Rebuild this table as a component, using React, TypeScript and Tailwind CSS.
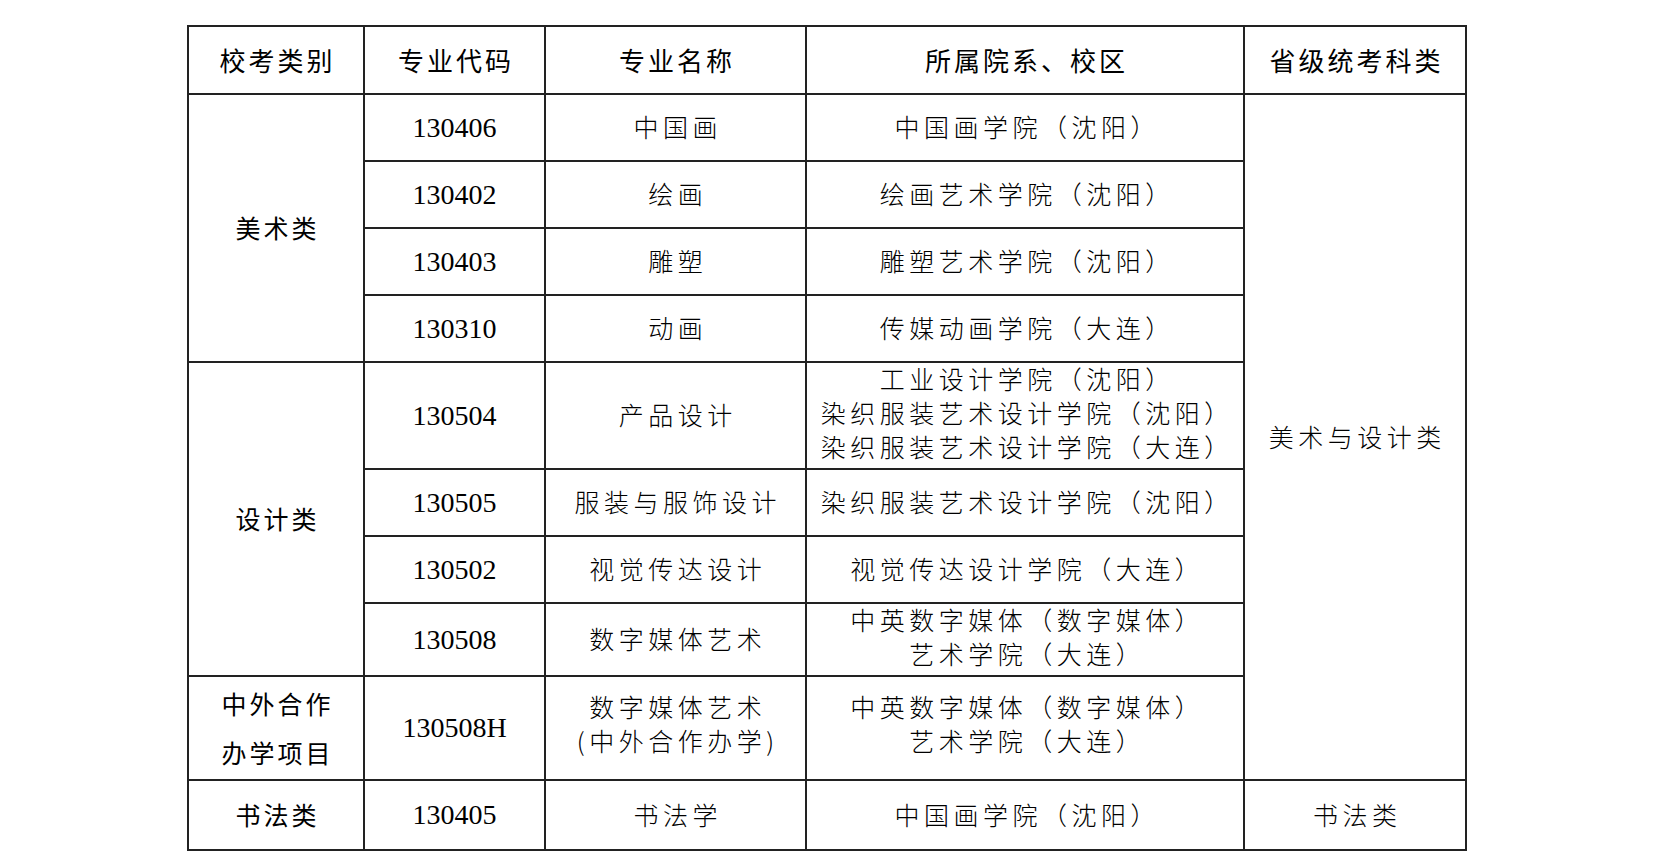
import React from 'react';

const cjk = "'Noto Sans CJK SC', 'Noto Sans', sans-serif";
const serif = "'Liberation Serif', 'Times New Roman', serif";

const line = 'border-2 border-[#222]';

function Txt({ children, head }: { children: React.ReactNode; head?: boolean }) {
  return (
    <span
      className={head ? 'tracking-[3px] -mr-[3px] font-normal' : 'tracking-[4.5px] -mr-[4.5px] font-light'}
      style={{ fontFamily: cjk }}
    >
      {children}
    </span>
  );
}

function Lines({ items, lh = 'leading-[33px]', head }: { items: string[]; lh?: string; head?: boolean }) {
  return (
    <div className={lh}>
      {items.map((t) => (
        <div key={t}>
          <Txt head={head}>{t}</Txt>
        </div>
      ))}
    </div>
  );
}

function Code({ children }: { children: string }) {
  return (
    <span className="text-[28px]" style={{ fontFamily: serif }}>
      {children}
    </span>
  );
}

const td = `${line} text-center align-middle p-0 text-[25px] text-black`;
const th = `${line} text-center align-middle p-0 text-[26px] text-black font-normal`;

export default function App() {
  return (
    <div className="min-h-[868px] w-full bg-white pt-[25px] pl-[187px]">
      <table className="table-fixed border-collapse w-[1278px]">
        <colgroup>
          <col className="w-[176px]" />
          <col className="w-[181px]" />
          <col className="w-[261px]" />
          <col className="w-[438px]" />
          <col className="w-[222px]" />
        </colgroup>
        <thead>
          <tr className="h-[68px]">
            <th className={th}><Txt head>校考类别</Txt></th>
            <th className={th}><Txt head>专业代码</Txt></th>
            <th className={th}><Txt head>专业名称</Txt></th>
            <th className={th}><Txt head>所属院系、校区</Txt></th>
            <th className={th}><Txt head>省级统考科类</Txt></th>
          </tr>
        </thead>
        <tbody>
          <tr className="h-[67px]">
            <td className={td} rowSpan={4}><Txt head>美术类</Txt></td>
            <td className={td}><Code>130406</Code></td>
            <td className={td}><Txt>中国画</Txt></td>
            <td className={td}><Txt>中国画学院（沈阳）</Txt></td>
            <td className={td} rowSpan={9}><Txt>美术与设计类</Txt></td>
          </tr>
          <tr className="h-[67px]">
            <td className={td}><Code>130402</Code></td>
            <td className={td}><Txt>绘画</Txt></td>
            <td className={td}><Txt>绘画艺术学院（沈阳）</Txt></td>
          </tr>
          <tr className="h-[67px]">
            <td className={td}><Code>130403</Code></td>
            <td className={td}><Txt>雕塑</Txt></td>
            <td className={td}><Txt>雕塑艺术学院（沈阳）</Txt></td>
          </tr>
          <tr className="h-[67px]">
            <td className={td}><Code>130310</Code></td>
            <td className={td}><Txt>动画</Txt></td>
            <td className={td}><Txt>传媒动画学院（大连）</Txt></td>
          </tr>
          <tr className="h-[107px]">
            <td className={td} rowSpan={4}><Txt head>设计类</Txt></td>
            <td className={td}><Code>130504</Code></td>
            <td className={td}><Txt>产品设计</Txt></td>
            <td className={td}>
              <div className="-mt-[6px]">
                <Lines items={['工业设计学院（沈阳）', '染织服装艺术设计学院（沈阳）', '染织服装艺术设计学院（大连）']} />
              </div>
            </td>
          </tr>
          <tr className="h-[67px]">
            <td className={td}><Code>130505</Code></td>
            <td className={td}><Txt>服装与服饰设计</Txt></td>
            <td className={td}><Txt>染织服装艺术设计学院（沈阳）</Txt></td>
          </tr>
          <tr className="h-[67px]">
            <td className={td}><Code>130502</Code></td>
            <td className={td}><Txt>视觉传达设计</Txt></td>
            <td className={td}><Txt>视觉传达设计学院（大连）</Txt></td>
          </tr>
          <tr className="h-[73px]">
            <td className={td}><Code>130508</Code></td>
            <td className={td}><Txt>数字媒体艺术</Txt></td>
            <td className={td}>
              <div className="-mt-[6px]">
                <Lines items={['中英数字媒体（数字媒体）', '艺术学院（大连）']} />
              </div>
            </td>
          </tr>
          <tr className="h-[104px]">
            <td className={td}>
              <Lines head lh="leading-[48px]" items={['中外合作', '办学项目']} />
            </td>
            <td className={td}><Code>130508H</Code></td>
            <td className={td}>
              <div className="-mt-[8px]">
                <Lines items={['数字媒体艺术', '(中外合作办学)']} />
              </div>
            </td>
            <td className={td}>
              <div className="-mt-[8px]">
                <Lines items={['中英数字媒体（数字媒体）', '艺术学院（大连）']} />
              </div>
            </td>
          </tr>
          <tr className="h-[70px]">
            <td className={td}><Txt head>书法类</Txt></td>
            <td className={td}><Code>130405</Code></td>
            <td className={td}><Txt>书法学</Txt></td>
            <td className={td}><Txt>中国画学院（沈阳）</Txt></td>
            <td className={td}><Txt>书法类</Txt></td>
          </tr>
        </tbody>
      </table>
    </div>
  );
}
